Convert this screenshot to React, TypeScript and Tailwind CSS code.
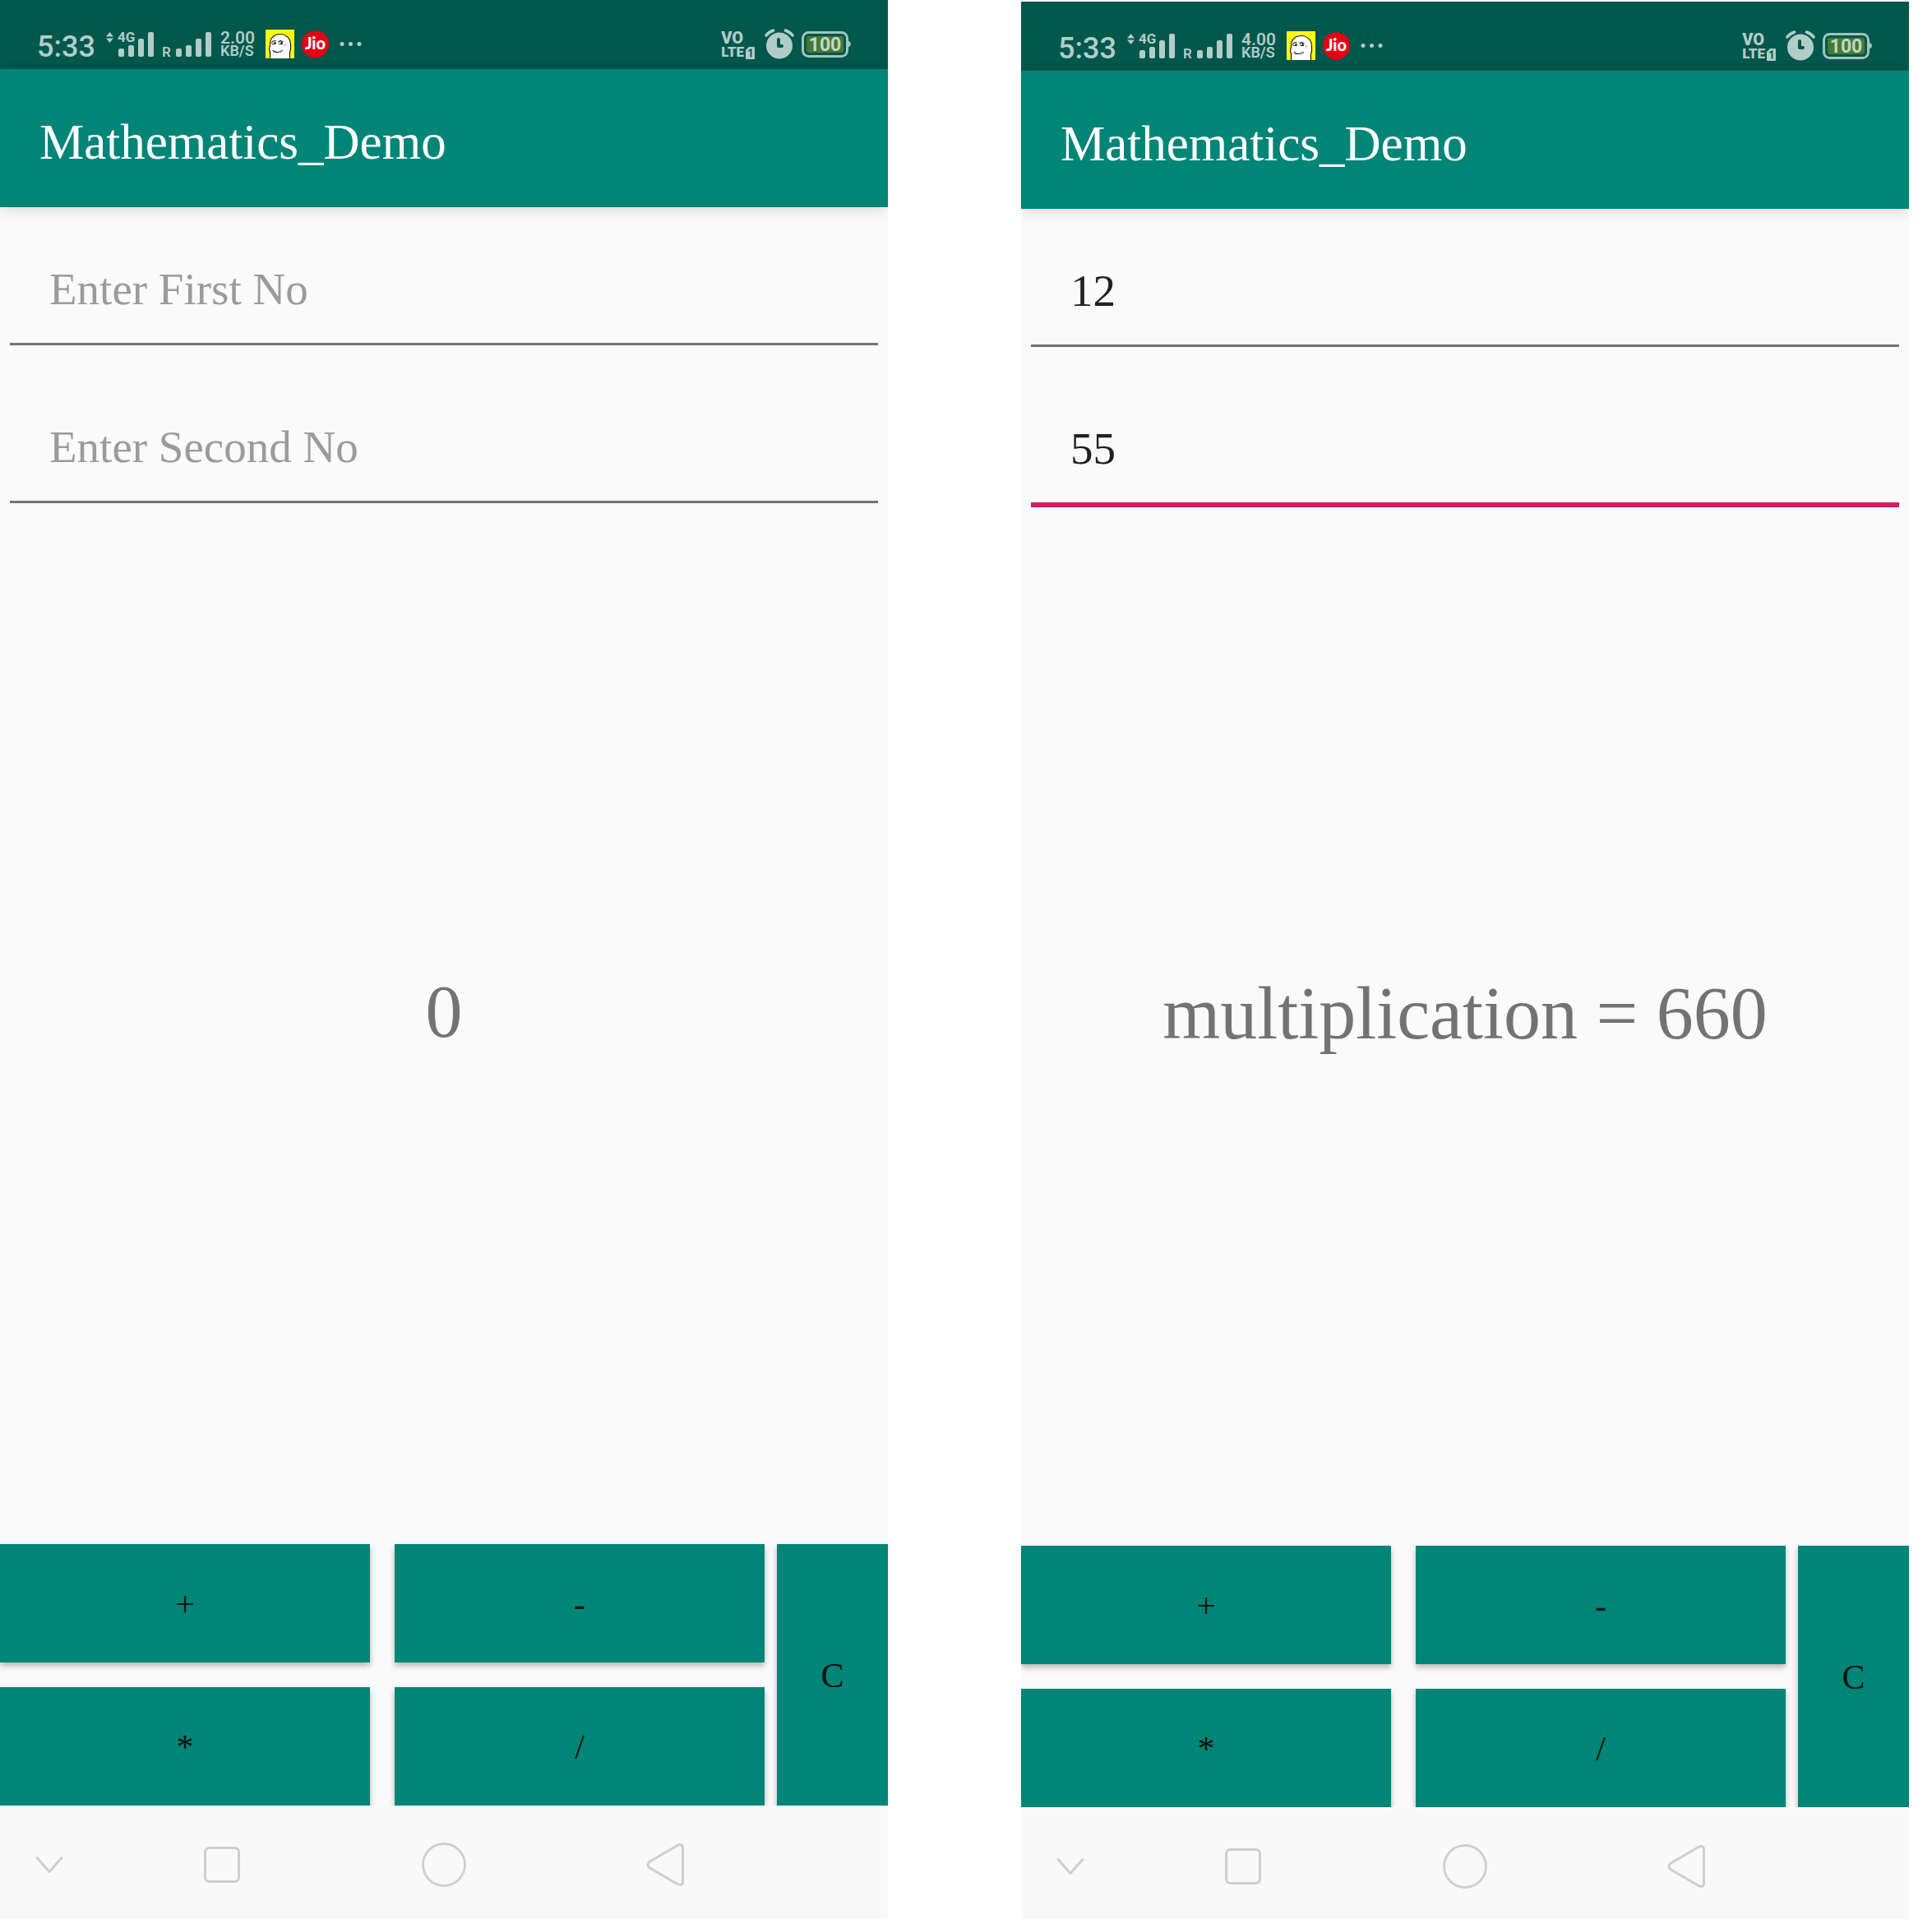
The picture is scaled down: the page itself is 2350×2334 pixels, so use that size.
import { useState } from "react";

type Operator = "+" | "-" | "*" | "/";

const operations: Record<Operator, { name: string; label: string; run: (a: number, b: number) => number }> = {
  "+": { name: "addition", label: "Add", run: (a, b) => a + b },
  "-": { name: "subtraction", label: "Subtract", run: (a, b) => a - b },
  "*": { name: "multiplication", label: "Multiply", run: (a, b) => a * b },
  "/": { name: "division", label: "Divide", run: (a, b) => a / b },
};

const operators: Operator[] = ["+", "-", "*", "/"];

function SignalBars({ x }: { x: number }) {
  return (
    <g fill="#b2ccc8">
      <rect x={x} y="23" width="7" height="10" rx="2" />
      <rect x={x + 12} y="19" width="7" height="14" rx="2" />
      <rect x={x + 24} y="11" width="7" height="22" rx="2" />
      <rect x={x + 36} y="3" width="7" height="30" rx="2" />
    </g>
  );
}

function DataSignal() {
  return (
    <svg width="58" height="36" viewBox="0 0 58 36" className="ml-[15px] shrink-0" role="img" aria-label="4G signal">
      <path d="M4.5 3 9 8.500H0ZM0 10.500H9L4.500 16Z" fill="#b2ccc8" />
      <text x="14" y="15" fontSize="17" fontWeight="700" fill="#b2ccc8" fontFamily="Roboto, sans-serif">
        4G
      </text>
      <SignalBars x={15} />
    </svg>
  );
}

function RoamingSignal() {
  return (
    <svg width="59" height="36" viewBox="0 0 59 36" className="ml-[11px] shrink-0" role="img" aria-label="Roaming signal">
      <text x="-1" y="33" fontSize="17" fontWeight="600" fill="#b2ccc8" fontFamily="Roboto, sans-serif">
        R
      </text>
      <SignalBars x={16} />
    </svg>
  );
}

function GhostIcon() {
  return (
    <svg width="35" height="35" viewBox="0 0 35 35" className="ml-[14px] shrink-0" aria-hidden="true">
      <rect width="35" height="35" rx="1" fill="#fffc14" />
      <path
        d="M5.500 35.500V27L4.500 25C4.500 22 5.500 21 5.500 17 5.500 10 11 5.500 18 5.500S30.500 11 30.500 18V25L29.500 27V35.500Z"
        fill="#fff"
        stroke="#1a1a1a"
        strokeWidth="1.200"
      />
      <g fill="none" stroke="#1a1a1a" strokeWidth="1.200">
        <path d="M7 16.500 9 14 12.500 13.500M8 17.500H12.500M15.500 15.500 18 13.500 21.500 15M16.500 17.500H21" />
        <path d="M9 25Q10 27.500 14.500 27.500T20.500 25" />
      </g>
      <path d="M10.500 15H12.500V17H10.500ZM18.500 15H20.500V17H18.500Z" fill="#1a1a1a" />
      <path d="M22.500 17H25V20H22.500ZM5.800 17.500H7V20.500H5.800Z" fill="#ffb9c3" />
    </svg>
  );
}

function JioIcon() {
  return (
    <svg width="33" height="34" viewBox="0 0 33 34" className="mt-px ml-[9px] shrink-0" role="img" aria-label="Jio">
      <ellipse cx="16.500" cy="16.800" rx="16.500" ry="16.600" fill="#e60012" />
      <text
        x="16.500"
        y="23"
        textAnchor="middle"
        fontSize="20"
        fontWeight="900"
        fill="#fff"
        fontFamily="Lato, sans-serif"
      >
        Jio
      </text>
    </svg>
  );
}

function MoreDots() {
  return (
    <svg width="27" height="36" viewBox="0 0 27 36" className="ml-[13px] shrink-0" fill="#b2ccc8" aria-hidden="true">
      <circle cx="3" cy="17.500" r="2.500" />
      <circle cx="13.500" cy="17.500" r="2.500" />
      <circle cx="24" cy="17.500" r="2.500" />
    </svg>
  );
}

function SimBadge() {
  return (
    <svg width="11" height="15" viewBox="0 0 11 15" className="shrink-0" aria-hidden="true">
      <path d="M4 0H10Q11 0 11 1V14Q11 15 10 15H1Q0 15 0 14V4Z" fill="#b2ccc8" />
      <path d="M3.500 5 6.500 3.500V12.500" fill="none" stroke="#00574b" strokeWidth="1.800" />
    </svg>
  );
}

function AlarmIcon() {
  return (
    <svg width="36" height="37" viewBox="0 0 36 37" className="-mt-px ml-3 shrink-0" role="img" aria-label="Alarm set">
      <circle cx="18" cy="20.500" r="16" fill="#b2ccc8" />
      <path d="M2 8Q5 4 10.500 2M34 8Q31 4 25.500 2" fill="none" stroke="#b2ccc8" strokeWidth="3.600" strokeLinecap="round" />
      <path d="M17 13V21H21" fill="none" stroke="#00574b" strokeWidth="4" strokeLinecap="round" strokeLinejoin="round" />
    </svg>
  );
}

function BatteryIcon() {
  return (
    <svg width="60" height="32" viewBox="0 0 60 32" className="mt-0.5 ml-[9px] shrink-0" role="img" aria-label="Battery 100%">
      <rect x="1.500" y="1.500" width="54" height="29" rx="7" fill="none" stroke="#a3c3be" strokeWidth="3" />
      <path d="M57 11.500Q60 13 60 15.500T57 19.500Z" fill="#a3c3be" />
      <rect x="6" y="6" width="45" height="20" rx="3" fill="#437a38" />
      <text
        x="28.500"
        y="24"
        textAnchor="middle"
        fontSize="23"
        fontWeight="700"
        fill="#c5d6c2"
        fontFamily="Roboto, sans-serif"
      >
        100
      </text>
    </svg>
  );
}

function StatusBar({ speed }: { speed: string }) {
  return (
    <div className="flex h-[84px] shrink-0 items-start justify-between bg-[#00574b] pt-9 pr-[45px] pl-[45px] font-[Roboto,sans-serif] text-[#b2ccc8]">
      <div className="flex items-start">
        <span className="w-[69px] text-[36px] leading-[43px] font-medium">5:33</span>
        <DataSignal />
        <RoamingSignal />
        <div className="ml-[11px] flex w-[41px] flex-col pt-0.5 font-semibold">
          <span className="text-[21px] leading-4">{speed}</span>
          <span className="text-[18px] leading-4">KB/S</span>
        </div>
        <GhostIcon />
        <JioIcon />
        <MoreDots />
      </div>
      <div className="flex items-start">
        <div className="flex flex-col pt-0.5 font-black">
          <span className="text-[20px] leading-4">VO</span>
          <div className="flex items-end gap-0.5">
            <span className="text-[17px] leading-[18px]">LTE</span>
            <SimBadge />
          </div>
        </div>
        <AlarmIcon />
        <BatteryIcon />
      </div>
    </div>
  );
}

function NumberField({
  label,
  value,
  onChange,
  active = false,
}: {
  label: string;
  value: string;
  onChange: (value: string) => void;
  active?: boolean;
}) {
  return (
    <input
      type="text"
      inputMode="decimal"
      aria-label={label}
      placeholder={label}
      value={value}
      onChange={(e) => onChange(e.target.value)}
      className={
        "h-[168px] w-full border-b-[3px] pt-[34px] pl-12 text-[55px] text-[#212121] outline-none placeholder:text-[#9b9b9b] placeholder:opacity-100 " +
        (active ? "border-[#d81b60] shadow-[0_3px_0_#d81b60]" : "border-[#737373]")
      }
    />
  );
}

function NavigationBar({ className }: { className: string }) {
  return (
    <nav
      aria-label="System navigation"
      className={
        "relative grid shrink-0 grid-cols-[12fr_30fr_24fr_30fr_12fr] items-start justify-items-center bg-[#f9f9f9] pt-[45px] text-[#cfcfcf] " +
        className
      }
    >
      <button type="button" aria-label="Hide navigation bar">
        <svg width="36" height="54" viewBox="0 0 36 54" fill="none" stroke="currentColor" strokeWidth="3" strokeLinecap="round" strokeLinejoin="round">
          <path d="M3 18.500 18 35.500 33 18.500" />
        </svg>
      </button>
      <button type="button" aria-label="Recent apps">
        <svg width="54" height="54" viewBox="0 0 54 54" fill="none" stroke="currentColor" strokeWidth="3">
          <rect x="6.500" y="6.500" width="41" height="41" rx="5" />
        </svg>
      </button>
      <button type="button" aria-label="Home">
        <svg width="54" height="54" viewBox="0 0 54 54" fill="none" stroke="currentColor" strokeWidth="2.800">
          <circle cx="27" cy="27" r="25.500" />
        </svg>
      </button>
      <button type="button" aria-label="Back">
        <svg width="54" height="54" viewBox="0 0 54 54" fill="none" stroke="currentColor" strokeWidth="3" strokeLinejoin="round">
          <path d="M41 3.500Q47.500 0.500 47.500 7V47Q47.500 53.500 41 50.500L7.500 31Q2.500 27 7.500 23Z" />
        </svg>
      </button>
    </nav>
  );
}

const keyClass =
  "bg-[#008577] pt-0.5 text-[42px] text-[#001411] shadow-[0_4px_7px_rgba(0,0,0,0.28)] active:bg-[#00776a]";

function Calculator({
  speed,
  initialFirst = "",
  initialSecond = "",
  initialResult = "0",
  activeField,
  className = "",
  navClassName,
}: {
  speed: string;
  initialFirst?: string;
  initialSecond?: string;
  initialResult?: string;
  activeField?: "first" | "second";
  className?: string;
  navClassName: string;
}) {
  const [first, setFirst] = useState(initialFirst);
  const [second, setSecond] = useState(initialSecond);
  const [result, setResult] = useState(initialResult);

  const calculate = (op: Operator) =>
    setResult(`${operations[op].name} = ${operations[op].run(Number(first), Number(second))}`);

  const clear = () => {
    setFirst("");
    setSecond("");
    setResult("0");
  };

  return (
    <section
      aria-label="Mathematics_Demo"
      className={"flex min-w-0 flex-1 flex-col overflow-hidden bg-[#fafafa] " + className}
    >
      <StatusBar speed={speed} />
      <header className="flex h-[168px] shrink-0 items-center bg-[#008577] px-12 pt-[10px] shadow-[0_3px_16px_rgba(0,0,0,0.14)]">
        <h1 className="text-[61px] text-white">Mathematics_Demo</h1>
      </header>
      <div className="flex flex-col gap-6 px-3">
        <NumberField label="Enter First No" value={first} onChange={setFirst} active={activeField === "first"} />
        <NumberField label="Enter Second No" value={second} onChange={setSecond} active={activeField === "second"} />
      </div>
      <div className="flex flex-1 items-center justify-center pb-7">
        <output className="text-center text-[90px] leading-[108px] text-[#737373]">{result}</output>
      </div>
      <div className="flex gap-[15px]">
        <div className="grid flex-1 grid-cols-2 gap-[30px]">
          {operators.map((op) => (
            <button
              key={op}
              type="button"
              aria-label={operations[op].label}
              onClick={() => calculate(op)}
              className={"h-[144px] " + keyClass}
            >
              {op}
            </button>
          ))}
        </div>
        <button type="button" aria-label="Clear" onClick={clear} className={"w-[135px] " + keyClass}>
          C
        </button>
      </div>
      <NavigationBar className={navClassName} />
    </section>
  );
}

export default function App() {
  return (
    <main className="flex min-h-screen gap-[162px] bg-white pr-7 font-['Liberation_Serif',serif]">
      <Calculator speed="2.00" navClassName="h-[138px]" />
      <Calculator
        speed="4.00"
        initialFirst="12"
        initialSecond="55"
        initialResult="multiplication = 660"
        activeField="second"
        className="mt-0.5"
        navClassName="h-[136px]"
      />
    </main>
  );
}
